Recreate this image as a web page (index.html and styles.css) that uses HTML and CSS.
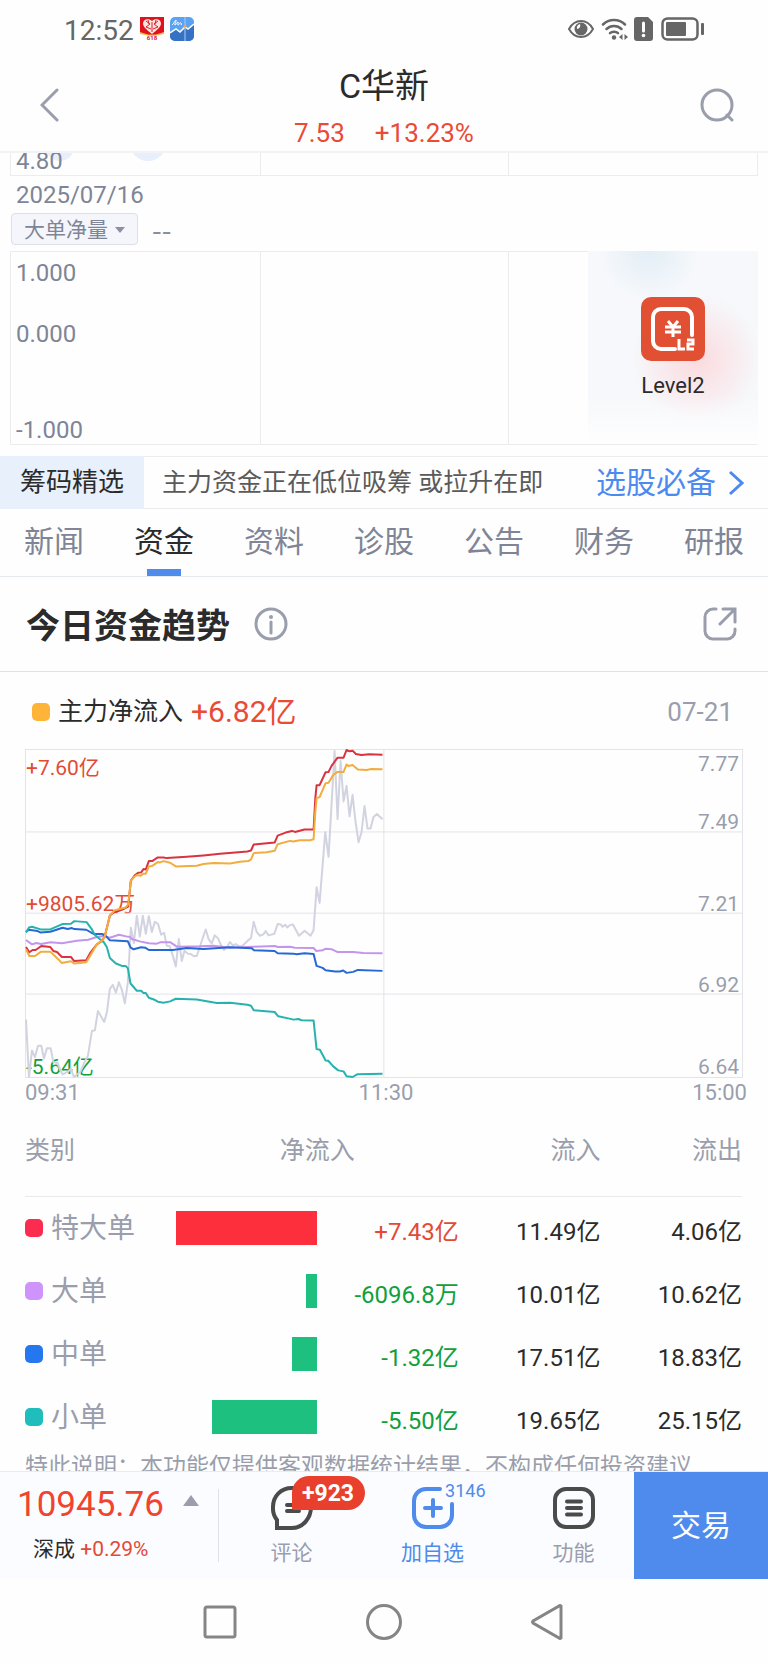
FILE: index.html
```html
<!DOCTYPE html>
<html lang="zh-CN">
  <head>
    <meta charset="utf-8" />
    <meta name="viewport" content="width=device-width, initial-scale=1" />
    <title>C华新</title>
    <link rel="stylesheet" href="styles.css">
  </head>
  <body>
    <div class="status-bar">
      <span class="clock">12:52</span>
      <svg class="app-icon" viewBox="0 0 24 24">
        <rect width="24" height="24" fill="#fff" />
        <path d="M0 0h24v16l-8 2H8l-8-2z" fill="#e0131d" />
        <path d="M0 15l8 2.500h8l8-2.500v1.800l-8 2H8l-8-2z" fill="#f3b54a" />
        <path d="M12 17C7 13 3 10 3 6.500 3 2 9 1 12 4c3-3 9-2 9 2.500 0 3.500-4 6.500-9 10.500z" fill="#fbe3e0" />
        <path d="M6 4l4 3-4 3 5 2M18 4l-4 3 4 3-5 2M12 5v10M8 3l1 4M16 3l-1 4" stroke="#d8202a" fill="none" />
        <text x="12" y="23" text-anchor="middle" class="app-618">618</text>
      </svg>
      <svg class="app-icon" viewBox="0 0 24 24">
        <rect width="24" height="24" rx="5" fill="#5aa2f5" />
        <path d="M0 16l6-4 4 3 5-5 3 2 6-5v12a5 5 0 0 1-5 5H5a5 5 0 0 1-5-5z" fill="#3672c4" />
        <path d="M0 16l6-4 4 3 5-5 3 2 6-5" stroke="#fff" stroke-width="1.500" fill="none" />
        <path d="M15 0v24" stroke="#a9cdf7" />
        <path d="M2 8c2-1 3-5 4-5s-2 5-1 5 2-3 3-3-1 3 0 3 2-3 3-2-1 3 1 1" stroke="#fff" fill="none" />
        <circle cx="15" cy="9" r="1.500" fill="#f3a23c" />
      </svg>
      <div class="status-right">
        <svg width="28" height="20" viewBox="0 0 28 20">
          <path d="M2 10C5 4.500 9 2 14 2s9 2.500 12 8c-3 5.500-7 8-12 8S5 15.500 2 10z" fill="none" stroke="#666" stroke-width="2" />
          <circle cx="14" cy="10" r="6.500" fill="#666" />
          <path d="M13 5a3.500 3.500 0 0 1-3 5 4 4 0 0 1 3-5z" fill="#fff" />
        </svg>
        <svg width="27" height="23" viewBox="0 0 27 23">
          <g fill="none" stroke="#666" stroke-width="2.500" stroke-linecap="round">
            <path d="M2 6.500c6-6 16-6 22 0" />
            <path d="M5.500 11c4-4 11-4 15 0" />
            <path d="M9 15.200c2-2 6-2 8 0" />
          </g>
          <circle cx="13" cy="19.500" r="2.200" fill="#666" />
          <path d="M21.500 16v6L18 19zM23.500 16v6l3.500-3z" fill="#666" />
        </svg>
        <svg width="20" height="24" viewBox="0 0 20 24">
          <path d="M3 0h11l5 5v16a3 3 0 0 1-3 3H3a3 3 0 0 1-3-3V3a3 3 0 0 1 3-3z" fill="#666" />
          <path d="M9.500 6v8" stroke="#fff" stroke-width="3" stroke-linecap="round" />
          <circle cx="9.500" cy="18.500" r="1.800" fill="#fff" />
        </svg>
        <svg width="44" height="24" viewBox="0 0 44 24">
          <rect x="2.500" y="1.500" width="35" height="21" rx="5" fill="none" stroke="#666" stroke-width="2.500" />
          <rect x="6" y="5" width="20" height="14" rx="1" fill="#666" />
          <rect x="41" y="6" width="3" height="12" rx="1" fill="#666" />
        </svg>
      </div>
    </div>

    <header class="header">
      <button class="icon-btn back" aria-label="返回">
        <svg width="20" height="34" viewBox="0 0 20 34"><path d="M17 2L2 17l15 15" class="line-icon" /></svg>
      </button>
      <div class="stock">
        <h1>C华新</h1>
        <p class="quote"><span>7.53</span><span>+13.23%</span></p>
      </div>
      <button class="icon-btn" aria-label="搜索">
        <svg width="34" height="34" viewBox="0 0 34 34">
          <circle cx="17" cy="17" r="15" class="line-icon" />
          <path d="M27 27l5 5" class="line-icon" />
        </svg>
      </button>
    </header>

    <main class="content">
      <div class="mini-chart mini-tail">
        <i></i><i></i><i></i>
        <svg class="bubbles" width="180" height="10" viewBox="0 0 180 10">
          <circle cx="49" cy="-6" r="14" />
          <circle cx="137" cy="-10" r="18" />
        </svg>
        <span class="mini-price">4.80</span>
      </div>
      <div class="date">2025/07/16</div>
      <div class="indicator">
        <button class="indicator-btn">大单净量
          <svg width="10" height="6" viewBox="0 0 10 6"><path d="M0 0h10L5 6z" fill="#8a90a0" /></svg>
        </button>
        <span class="empty">--</span>
      </div>
      <div class="mini-chart">
        <i></i><i></i><i></i>
        <div class="mini-labels"><span>1.000</span><span>0.000</span><span>-1.000</span></div>
        <a class="level2" href="#">
          <svg width="64" height="64" viewBox="0 0 64 64">
            <rect width="64" height="64" rx="10" fill="#e25033" />
            <path d="M34 52H20a8 8 0 0 1-8-8V20a8 8 0 0 1 8-8h23a8 8 0 0 1 8 8v18" fill="none" stroke="#fff" stroke-width="4" stroke-linecap="round" />
            <path d="M27 24l5 6 5-6M32 30v10M24 30h16M24 35h16" fill="none" stroke="#fff" stroke-width="3" />
            <path d="M38 42v10h6M46 43h6v4h-5v5h6" fill="none" stroke="#fff" stroke-width="3" />
          </svg>
          Level2
        </a>
      </div>

      <div class="banner">
        <strong>筹码精选</strong>
        <span>主力资金正在低位吸筹 或拉升在即</span>
        <a href="#">选股必备
          <svg width="16" height="26" viewBox="0 0 16 26"><path d="M2 2l12 11L2 24" fill="none" stroke="#4c8af0" stroke-width="3" /></svg>
        </a>
      </div>

      <nav class="tabs">
        <a href="#">新闻</a>
        <a href="#" class="active">资金</a>
        <a href="#">资料</a>
        <a href="#">诊股</a>
        <a href="#">公告</a>
        <a href="#">财务</a>
        <a href="#">研报</a>
      </nav>

      <section class="flow">
        <div class="flow-head">
          <h2>今日资金趋势</h2>
          <svg width="34" height="34" viewBox="0 0 34 34">
            <circle cx="17" cy="17" r="15" class="line-icon" />
            <path d="M17 15v11" class="line-icon" />
            <circle cx="17" cy="10" r="2" fill="#9a9eac" />
          </svg>
          <button class="icon-btn share" aria-label="分享">
            <svg width="34" height="34" viewBox="0 0 34 34">
              <path d="M13 2H10a8 8 0 0 0-8 8v14a8 8 0 0 0 8 8h14a8 8 0 0 0 8-8v-2" class="line-icon" />
              <path d="M20 2h12v13M32 2L17 17" class="line-icon" />
            </svg>
          </button>
        </div>

        <div class="legend">
          <i class="dot orange"></i>
          <span>主力净流入</span>
          <b>+6.82亿</b>
          <time>07-21</time>
        </div>

        <div class="trend">
          <div class="axis left">
            <div><span class="up">+7.60亿</span></div>
            <div><span class="up">+9805.62万</span></div>
            <div></div>
            <div><span class="down">-5.64亿</span></div>
          </div>
          <div class="axis right">
            <div><span>7.77</span><span>7.49</span></div>
            <div><span>7.21</span></div>
            <div><span>6.92</span></div>
            <div><span>6.64</span></div>
          </div>
          <svg class="lines" viewBox="77 42 2151 986" preserveAspectRatio="none">
            <path class="grid" d="M77 289H2228M77 534H2228M77 778H2228M1152 42V1028" />
            <!-- price -->
            <polyline stroke="#d2d3e0" points="77,855 86,1028 95,948 104,968 113,934 123,934 131,972 140,941 151,941 159,983 172,986 180,1008 187,1020 203,1012 212,1003 221,1028 240,1013 252,985 263,965 275,889 284,887 293,829 312,862 320,833 329,762 338,750 347,774 356,742 365,765 374,806 383,742 392,578 401,624 410,542 419,605 428,542 437,596 446,543 455,591 464,560 474,567 483,599 492,593 500,632 509,634 518,662 527,695 536,612 545,678 553,647 563,656 572,657 580,663 590,663 599,636 608,609 617,583 626,613 635,625 644,601 654,610 663,631 672,645 682,634 690,621 699,632 707,627 716,634 726,634 744,616 753,609 761,560 770,591 780,602 790,598 797,588 806,601 823,596 833,567 842,568 848,575 856,569 862,577 870,570 879,568 897,602 914,587 932,602 941,585 950,456 959,503 976,290 986,364 1004,45 1013,250 1022,75 1031,197 1040,150 1049,242 1058,177 1067,258 1076,320 1085,290 1094,211 1103,279 1112,279 1121,244 1131,235 1148,251" />
            <polyline stroke="#c396ec" points="77,615 95,628 108,624 122,627 151,622 185,625 230,617 264,614 290,606 310,603 329,608 356,599 378,604 390,606 395,612 419,619 446,625 470,626 480,622 511,622 530,635 600,634 640,632 690,638 760,635 825,633 833,636 870,635 885,638 941,639 949,648 968,646 977,641 996,643 1012,651 1060,651 1090,654 1148,655" />
            <polyline stroke="#2469d4" points="77,591 85,584 112,588 120,592 150,590 187,578 202,582 215,579 222,582 258,584 281,597 307,597 318,604 329,616 383,619 391,637 400,643 423,637 435,638 446,645 518,645 560,639 610,642 690,637 755,640 762,646 824,648 833,655 880,656 890,658 914,655 941,657 950,693 968,699 977,706 1006,710 1020,710 1030,707 1040,714 1060,711 1074,705 1148,708" />
            <polyline stroke="#26b3ae" points="77,592 86,577 95,575 121,583 150,583 186,567 212,566 222,558 259,561 275,583 284,600 311,622 320,637 329,669 346,685 365,693 376,693 383,700 391,746 410,768 423,768 430,775 437,775 446,789 465,796 473,801 490,804 510,800 527,792 590,794 650,805 690,804 742,810 753,813 761,827 824,832 835,845 868,852 881,855 895,853 905,857 941,858 950,944 960,946 977,978 985,979 1000,996 1015,1008 1031,1011 1040,1026 1058,1028 1072,1020 1148,1018" />
            <polyline stroke="#d9333f" points="77,636 87,652 97,645 106,645 123,633 150,636 159,648 170,651 185,666 212,666 221,678 258,676 270,654 290,628 305,618 314,603 329,541 340,532 365,524 384,514 392,436 404,420 414,412 423,411 430,401 437,402 446,377 456,377 473,366 490,366 500,368 560,364 610,360 660,355 742,348 753,345 761,327 824,321 833,300 857,291 876,286 885,289 914,282 941,282 946,190 950,148 959,148 977,109 986,108 995,90 1013,65 1031,65 1040,42 1049,46 1058,44 1068,54 1085,57 1108,55 1148,56" />
            <polyline stroke="#f3ac3e" points="77,643 87,663 104,663 122,650 150,650 176,675 184,684 212,679 222,686 258,682 270,662 290,628 306,616 314,603 329,541 344,525 376,517 384,508 392,436 402,425 410,419 421,421 430,415 437,415 446,393 455,392 473,380 480,381 490,377 510,382 527,393 590,391 610,386 640,383 690,384 720,379 745,377 753,372 761,353 800,350 824,346 833,326 870,316 880,318 900,314 930,314 941,311 946,230 950,187 959,184 977,142 986,141 1000,117 1013,108 1031,108 1040,86 1046,90 1058,87 1074,101 1100,102 1115,99 1148,100" />
          </svg>
        </div>
        <div class="times"><span>09:31</span><span>11:30</span><span>15:00</span></div>

        <table class="orders">
          <colgroup><col class="col-name"><col><col><col><col></colgroup>
          <thead>
            <tr><th>类别</th><th colspan="2" class="center">净流入</th><th>流入</th><th>流出</th></tr>
          </thead>
          <tbody>
            <tr>
              <th><i class="dot red"></i>特大单</th>
              <td><div class="bar rise" style="width: 100%"></div></td>
              <td class="up">+7.43亿</td><td>11.49亿</td><td>4.06亿</td>
            </tr>
            <tr>
              <th><i class="dot purple"></i>大单</th>
              <td><div class="bar" style="width: 8%"></div></td>
              <td class="down">-6096.8万</td><td>10.01亿</td><td>10.62亿</td>
            </tr>
            <tr>
              <th><i class="dot blue"></i>中单</th>
              <td><div class="bar" style="width: 18%"></div></td>
              <td class="down">-1.32亿</td><td>17.51亿</td><td>18.83亿</td>
            </tr>
            <tr>
              <th><i class="dot teal"></i>小单</th>
              <td><div class="bar" style="width: 74%"></div></td>
              <td class="down">-5.50亿</td><td>19.65亿</td><td>25.15亿</td>
            </tr>
          </tbody>
        </table>
        <p class="note">特此说明：本功能仅提供客观数据统计结果，不构成任何投资建议</p>
      </section>
    </main>

    <footer class="toolbar">
      <div class="index">
        <div class="index-value">10945.76
          <svg width="16" height="11" viewBox="0 0 16 11"><path d="M8 0l8 11H0z" fill="#9a9eac" /></svg>
        </div>
        <div class="index-change">深成 <span class="up">+0.29%</span></div>
      </div>
      <div class="tools">
        <button class="tool">
          <svg width="42" height="44" viewBox="0 0 42 44">
            <path d="M6 42V34A19 19 0 0 1 2 21C2 10 10 2 21 2s19 8 19 19-8 21-19 21z" fill="none" stroke="#4b4b4b" stroke-width="4" />
            <path d="M16 19h12M16 25h12" stroke="#4b4b4b" stroke-width="4" stroke-linecap="round" />
          </svg>
          <span class="badge">+923</span>
          评论
        </button>
        <button class="tool add">
          <svg width="42" height="44" viewBox="0 0 42 44">
            <path d="M28 3H14A12 12 0 0 0 2 15v14a12 12 0 0 0 12 12h14a12 12 0 0 0 12-12V18" fill="none" stroke="#4f8bea" stroke-width="4" stroke-linecap="round" />
            <path d="M21 14v16M13 22h16" stroke="#4f8bea" stroke-width="4" stroke-linecap="round" />
          </svg>
          <span class="count">3146</span>
          加自选
        </button>
        <button class="tool">
          <svg width="42" height="44" viewBox="0 0 42 44">
            <rect x="2" y="3" width="38" height="38" rx="11" fill="none" stroke="#4b4b4b" stroke-width="4" />
            <path d="M14 15.500h14M14 22h14M14 28.500h14" stroke="#4b4b4b" stroke-width="4" stroke-linecap="round" />
          </svg>
          功能
        </button>
      </div>
      <button class="trade">交易</button>
    </footer>

    <div class="system-nav">
      <svg width="36" height="36" viewBox="0 0 36 36"><rect x="3" y="3" width="30" height="30" rx="2" /></svg>
      <svg width="36" height="36" viewBox="0 0 36 36"><circle cx="18" cy="18" r="16.500" /></svg>
      <svg width="36" height="36" viewBox="0 0 36 36"><path d="M31 2v32q-1 1-2 0L3 19q-1-1 0-2L29 2q1-1 2 0z" /></svg>
    </div>
  </body>
</html>
```

FILE: styles.css
```css
* {
  box-sizing: border-box;
}
body {
  margin: 0;
  height: 100vh;
  display: flex;
  flex-direction: column;
  background: #fefefe;
  color: #2b2b2b;
  font-family: Roboto, "Noto Sans CJK SC", sans-serif;
  font-size: 24px;
  line-height: 32px;
}
h1,
h2,
p {
  margin: 0;
}
a {
  color: inherit;
  text-decoration: none;
}
button {
  background: none;
  border: none;
  padding: 0;
  color: inherit;
  font: inherit;
  cursor: pointer;
}
svg {
  display: block;
  flex: none;
}
.up {
  color: #e24a36;
}
.down {
  color: #10a03c;
}
.line-icon {
  fill: none;
  stroke: #9a9eac;
  stroke-width: 3;
  stroke-linecap: round;
}

/* phone status bar */
.status-bar {
  display: flex;
  align-items: center;
  gap: 6px;
  height: 58px;
  padding: 0 64px;
}
.clock {
  padding-top: 3px;
  font-size: 28px;
  color: #666;
}
.app-icon {
  width: 24px;
  height: 24px;
}
.app-618 {
  font-size: 6px;
  font-weight: 700;
  fill: #d8202a;
}
.status-right {
  display: flex;
  align-items: center;
  gap: 6px;
  margin-left: auto;
}

/* title */
.header {
  display: flex;
  align-items: center;
  height: 95px;
  padding: 0 34px;
  border-bottom: 2px solid #f3f3f5;
}
.icon-btn {
  display: flex;
  width: 34px;
}
.back {
  padding-left: 6px;
}
.stock {
  flex: 1;
  padding-top: 1px;
  text-align: center;
}
.stock h1 {
  font-size: 34px;
  font-weight: 400;
  line-height: 56px;
}
.quote {
  display: flex;
  justify-content: center;
  gap: 30px;
  font-size: 26px;
  line-height: 38px;
  color: #e94b35;
}

.content {
  flex: 1;
  min-height: 0;
  overflow: hidden;
}

/* small indicator charts */
.mini-chart {
  position: relative;
  display: grid;
  grid-template-columns: repeat(3, 1fr);
  height: 194px;
  margin: 6px 10px 11px;
  border: 1px solid #ececef;
  color: #7f8596;
}
.mini-chart > i + i {
  border-left: 1px solid #ececef;
}
.mini-tail {
  height: 23px;
  margin: 0 10px;
  border-top: none;
  overflow: hidden;
}
.mini-price {
  position: absolute;
  left: 5px;
  bottom: -2px;
}
.bubbles {
  position: absolute;
  top: 0;
  left: 0;
  fill: #e6effb;
}
.mini-labels {
  position: absolute;
  inset: 5px auto -2px 5px;
  display: flex;
  flex-direction: column;
}
.mini-labels span:nth-child(2) {
  margin: 29px 0 auto;
}
.level2 {
  position: absolute;
  inset: -1px -1px 0 auto;
  width: 170px;
  display: flex;
  flex-direction: column;
  align-items: center;
  gap: 9px;
  padding-top: 46px;
  color: #2b2b2b;
  font-size: 22px;
  background:
    linear-gradient(transparent 75%, #fefefe),
    radial-gradient(circle at 64% 56%, #fbdade, rgba(251, 218, 222, 0) 42%),
    radial-gradient(circle at 36% 0, #e2eef6, rgba(226, 238, 246, 0) 22%),
    #f6f8fb;
}
.date {
  padding: 3px 16px 2px;
  color: #7f8596;
}
.indicator {
  display: flex;
  gap: 14px;
  padding: 0 11px;
  color: #8a8f9e;
}
.indicator-btn {
  display: flex;
  align-items: center;
  gap: 7px;
  height: 32px;
  padding: 2px 12px 0;
  font-size: 21px;
  line-height: 28px;
  color: #7f8596;
  background: #f4f6fb;
  border: 1px solid #dde0ea;
  border-radius: 4px;
}
.empty {
  font-family: "Noto Sans CJK SC", sans-serif;
  font-size: 28px;
}

.banner {
  display: flex;
  align-items: center;
  height: 53px;
  border: solid #ececef;
  border-width: 1px 0;
  font-size: 26px;
  line-height: 53px;
  color: #5a5a5a;
}
.banner strong {
  padding: 0 20px;
  margin-right: 18px;
  font-weight: 400;
  color: #2b2b2b;
  background: #e8f0fc;
}
.banner span {
  font-size: 25px;
}
.banner a {
  display: flex;
  align-items: center;
  gap: 12px;
  margin-left: auto;
  padding-right: 24px;
  font-size: 30px;
  color: #4c8af0;
}

.tabs {
  display: flex;
  justify-content: space-between;
  height: 68px;
  padding: 0 24px;
  border-bottom: 1px solid #e6e9ec;
  font-size: 30px;
  line-height: 66px;
  color: #7f8596;
}
.tabs .active {
  display: flex;
  flex-direction: column;
  align-items: center;
  color: #2b2b2b;
}
.tabs .active::after {
  content: "";
  width: 34px;
  height: 7px;
  margin-top: -6px;
  background: #4f8bea;
}

/* money flow */
.flow-head {
  display: flex;
  align-items: center;
  gap: 24px;
  height: 95px;
  padding: 0 31px 0 26px;
  border-bottom: 1px solid #dfe3e6;
}
.flow-head h2 {
  padding-top: 3px;
  font-size: 34px;
  font-weight: 700;
}
.share {
  margin-left: auto;
}
.dot {
  flex: none;
  width: 18px;
  height: 18px;
  border-radius: 5px;
}
.orange {
  background: #feb439;
}
.red {
  background: #fb2c50;
}
.purple {
  background: #cf93fc;
}
.blue {
  background: #2577f0;
}
.teal {
  background: #20bdbd;
}
.legend {
  display: flex;
  align-items: center;
  gap: 8px;
  height: 77px;
  padding: 2px 35px 0 32px;
  font-size: 25px;
}
.legend b {
  font-size: 30px;
  font-weight: 400;
  color: #e94b35;
}
.legend time {
  margin-left: auto;
  font-size: 26px;
  color: #9a9eac;
}
.trend {
  position: relative;
  height: 329px;
  margin: 0 25px;
  border: 1px solid #e3e4ea;
}
.axis {
  position: absolute;
  inset: 1px 0 -1px;
  display: grid;
  grid-template-rows: repeat(4, 1fr);
  font-size: 21px;
  line-height: 22px;
  color: #9a9eac;
}
.axis div {
  display: flex;
  flex-direction: column;
  justify-content: flex-end;
}
.axis.left div:first-child {
  justify-content: flex-start;
  padding-top: 6px;
}
.axis.right {
  text-align: right;
  padding-right: 3px;
}
.axis.right div:first-child {
  justify-content: space-between;
  padding-top: 2px;
}
.lines {
  position: absolute;
  inset: 0;
  width: 100%;
  height: 100%;
  overflow: visible;
}
.lines * {
  fill: none;
  stroke-width: 2;
  stroke-linejoin: round;
  vector-effect: non-scaling-stroke;
}
.lines .grid {
  stroke: #e3e4ea;
  stroke-width: 1;
}
.times {
  display: flex;
  justify-content: space-between;
  padding: 1px 21px 0 25px;
  font-size: 22px;
  line-height: 28px;
  color: #9a9eac;
}
.orders {
  width: calc(100% - 51px);
  margin: 0 26px 0 25px;
  table-layout: fixed;
  border-collapse: collapse;
  text-align: right;
}
.orders th,
.orders td {
  padding: 0;
  font-weight: 400;
}
.orders th {
  color: #9a9eac;
}
.orders thead th {
  height: 89px;
  font-size: 25px;
  border-bottom: 1px solid #e9eaec;
}
.orders th:first-child {
  text-align: left;
}
.orders .center {
  text-align: center;
}
.orders tbody tr {
  height: 63px;
}
.orders tbody th {
  padding-top: 3px;
  font-size: 28px;
}
.orders tbody .dot {
  display: inline-block;
  margin-right: 8px;
  vertical-align: 1px;
}
.orders tbody td {
  padding-top: 8px;
}
.orders tbody td:nth-child(2) {
  padding-top: 0;
}
.col-name {
  width: 21%;
}
.bar {
  height: 34px;
  margin-left: auto;
  background: #1dc07e;
}
.bar.rise {
  background: #fd2f3d;
}
.note {
  padding: 1px 25px 0;
  font-size: 23px;
  line-height: 36px;
  color: #9a9eac;
}

/* bottom toolbar */
.toolbar {
  display: flex;
  height: 108px;
  border-top: 1px solid #e8ebf3;
  background: #fbfcff;
}
.index {
  flex: 0 0 219px;
  margin: 17px 0;
  padding-left: 17px;
  border-right: 1px solid #dfe1ea;
}
.index-value {
  display: flex;
  gap: 19px;
  font-size: 35px;
  color: #f0442f;
}
.index-value svg {
  margin-top: 6px;
}
.index-change {
  padding: 12px 0 0 16px;
  font-size: 21px;
}
.tools {
  flex: 1;
  display: flex;
  justify-content: space-between;
  padding: 14px 29px 0 41px;
}
.tool {
  position: relative;
  width: 63px;
  display: flex;
  flex-direction: column;
  align-items: center;
  gap: 7px;
  font-size: 21px;
  color: #9a9eac;
}
.add {
  color: #4f8bea;
}
.badge {
  position: absolute;
  top: -10px;
  left: 50%;
  width: 73px;
  height: 34px;
  border-radius: 17px 17px 17px 2px;
  background: #e8402c;
  color: #fff;
  font-size: 23px;
  font-weight: 700;
  line-height: 36px;
}
.count {
  position: absolute;
  top: -5px;
  left: 70%;
  font-size: 18px;
  line-height: 20px;
}
.trade {
  width: 134px;
  background: #4f8bed;
  color: #fff;
  font-size: 30px;
}

.system-nav {
  display: flex;
  justify-content: center;
  align-items: center;
  gap: 128px;
  height: 85px;
}
.system-nav svg {
  fill: none;
  stroke: #858585;
  stroke-width: 3;
}
```
